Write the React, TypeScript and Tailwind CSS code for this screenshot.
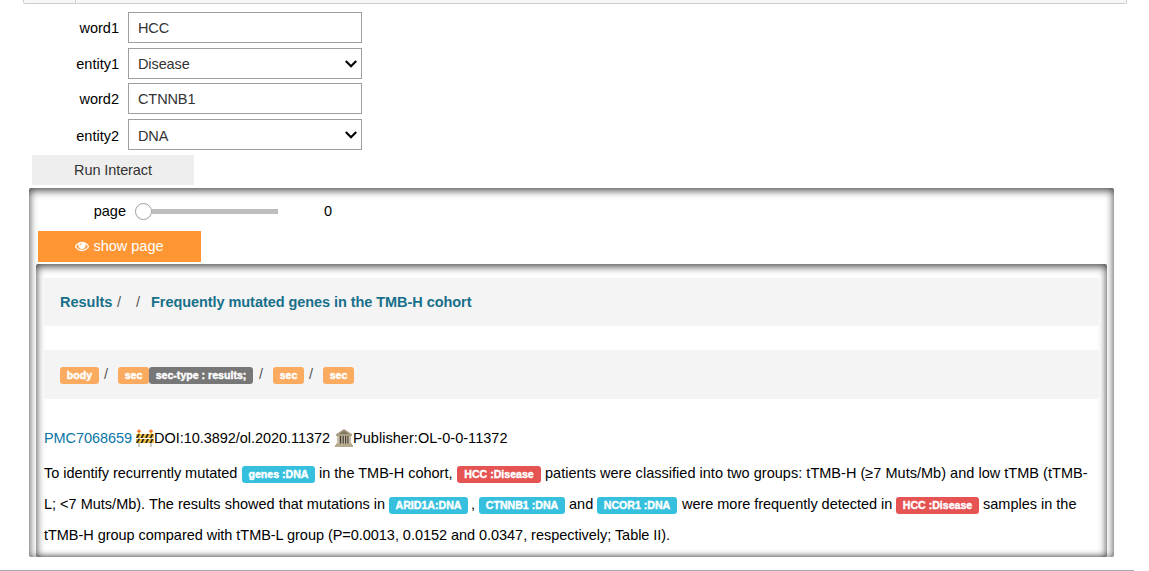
import type { ReactNode } from 'react';

function Eye() {
  return (
    <svg className="mr-[4px] h-[14px] w-[14px] shrink-0" viewBox="0 0 1792 1792" fill="currentColor" stroke="currentColor" strokeWidth="40">
      <path d="M1664 960q-152-236-381-353 61 104 61 225 0 185-131.500 316.500t-316.500 131.500-316.500-131.500-131.500-316.500q0-121 61-225-229 117-381 353 133 205 333.500 326.500t434.500 121.500 434.500-121.500 333.500-326.500zm-720-384q0-20-14-34t-34-14q-125 0-214.500 89.500t-89.500 214.500q0 20 14 34t34 14 34-14 14-34q0-86 61-147t147-61q20 0 34-14t14-34zm848 384q0 34-20 69-140 230-376.500 368.500t-499.500 138.500-499.500-139-376.500-368q-20-35-20-69t20-69q140-229 376.500-368t499.500-139 499.500 139 376.500 368q20 35 20 69z" />
    </svg>
  );
}

function Chevron() {
  return (
    <svg className="mr-[4px] h-[9px] w-[12px] shrink-0" viewBox="0 0 12 9" fill="none" stroke="#000" strokeWidth="2.1">
      <path d="M0.8 2.1 L6 7.2 L11.2 2.1" />
    </svg>
  );
}

function Field({ label, value, select = false, className = '', textClass = '' }: { label: string; value: string; select?: boolean; className?: string; textClass?: string }) {
  return (
    <div className={`flex h-[31px] items-center ${className}`}>
      <span className={`mr-[9px] w-[87px] text-right text-black ${textClass}`}>{label}</span>
      <div className="flex h-[31px] w-[234px] items-center justify-between border border-[#9e9e9e] bg-white pl-[9px] text-[#333]">
        <span className={`tracking-[-0.1px] ${textClass}`}>{value}</span>
        {select && <Chevron />}
      </div>
    </div>
  );
}

function Tag({ color, className = '', children }: { color: 'orange' | 'gray'; className?: string; children: ReactNode }) {
  const tone = color === 'orange' ? 'bg-[#fbab60]' : 'bg-[#777]';
  return (
    <span className={`flex h-[17px] shrink-0 items-center justify-center rounded-[3px] text-[10.6px] font-bold leading-[15px] text-white [-webkit-text-stroke:0.4px_white] ${tone} ${className}`}>
      {children}
    </span>
  );
}

function Entity({ color, className = '', children }: { color: 'blue' | 'red'; className?: string; children: ReactNode }) {
  const tone = color === 'blue' ? 'bg-[#36c0de]' : 'bg-[#e55353]';
  return (
    <span className={`mt-[3px] flex h-[17px] shrink-0 items-center justify-center rounded-[3px] text-[10.6px] font-bold text-white [-webkit-text-stroke:0.4px_white] ${tone} ${className}`}>
      {children}
    </span>
  );
}

function Barrier() {
  return (
    <svg className="h-[18px] w-[18px] shrink-0" viewBox="0 0 18 18">
      <path d="M2 4h2v14H2zM14 4h2v14h-2z" fill="#c9c9c5" />
      <path d="M0 5h18v4H0zM0 10h18v4H0z" fill="#f3c244" />
      <path d="M2 5h2L2 9H0zM6.500 5h2l-2 4h-2zM11 5h2l-2 4H9zM15.500 5h2l-2 4h-2zM2 10h2l-2 4H0zM6.500 10h2l-2 4h-2zM11 10h2l-2 4H9zM15.500 10h2l-2 4h-2z" fill="#2c2820" />
      <circle cx="3" cy="2.200" r="1.800" fill="#f47b35" />
      <circle cx="15" cy="2.200" r="1.800" fill="#f47b35" />
      <path d="M2 3.500h2V5H2zM14 3.500h2V5h-2z" fill="#ffd64a" />
    </svg>
  );
}

function Building() {
  return (
    <svg className="h-[18px] w-[18px] shrink-0" viewBox="0 0 18 18">
      <path d="M9 0L17 5.300V7H1V5.300z" fill="#a99d83" />
      <path d="M9 1.800L14 5H4z" fill="#82775f" />
      <path d="M2 7h14v8H2z" fill="#3e382f" />
      <path d="M2 7h2.800v8H2zM6.200 7h1.400v8H6.200zM8.800 7h1.200v8H8.800zM11.200 7h1.200v8h-1.200zM13.500 7H16v8h-2.500z" fill="#c9bea4" />
      <path d="M1 14.500h16v1.500H1zM0 16h18v2H0z" fill="#b5a98e" />
    </svg>
  );
}

export default function App() {
  return (
    <div className="h-[571px] w-[1149px] overflow-hidden bg-white font-['Liberation_Sans',Arial,sans-serif] text-[14.5px] leading-[20px] text-black">
      <div className="ml-[23px] flex h-[4px] w-[1104px] rounded-b-[2px] border border-t-0 border-[#cfcfcf] bg-[#f7f7f7]">
        <div className="w-[52px] border-r border-[#cfcfcf]" />
      </div>
      <div className="ml-[32px] pt-[8px]">
        <Field label="word1" value="HCC" />
        <Field label="entity1" value="Disease" select className="mt-[5px]" />
        <Field label="word2" value="CTNNB1" className="mt-[4px]" />
        <Field label="entity2" value="DNA" select className="mt-[5px]" textClass="pt-[2px]" />
        <button className="mt-[5px] flex h-[30px] w-[162px] items-center justify-center bg-[#eee] tracking-[-0.1px] text-[#333]">Run Interact</button>
      </div>

      <div className="ml-[29px] mt-[3px] h-[369px] w-[1085px] overflow-hidden rounded-[2px] shadow-[inset_0_2px_8px_rgba(0,0,0,0.8)]">
        <div className="flex h-[43px] items-center pt-[3px]">
          <span className="w-[97px] text-right">page</span>
          <span className="ml-[9px] h-[17px] w-[17px] rounded-full border border-[#9e9e9e] bg-white" />
          <span className="h-[5px] w-[126px] bg-[#bdbdbd]" />
          <span className="ml-[46px]">0</span>
        </div>
        <button className="ml-[9px] flex h-[31px] w-[163px] items-center justify-center bg-[#ff9633] pb-px text-white">
          <Eye />
          <span>show page</span>
        </button>

        <div className="ml-[7px] mt-[2px] h-[293px] w-[1071px] overflow-hidden rounded-[2px] px-[8px] pt-[14px] shadow-[inset_0_2px_8px_rgba(0,0,0,0.8)]">
          <div className="flex h-[48px] items-center rounded-[2px] bg-[#f4f4f4] pl-[16px] text-[#555]">
            <span className="w-[52px] font-bold text-[#17708a]">Results</span>
            <span className="ml-[5px] w-[19px]">/</span>
            <span className="w-[15px]">/</span>
            <span className="font-bold tracking-[-0.06px] text-[#17708a]">Frequently mutated genes in the TMB-H cohort</span>
          </div>

          <div className="mt-[24px] flex h-[49px] items-center rounded-[2px] bg-[#f4f4f4] pl-[16px] pt-[2px] text-[#555]">
            <Tag color="orange" className="w-[39px]">body</Tag>
            <span className="-mt-[3px] ml-[5px] w-[14px]">/</span>
            <Tag color="orange" className="w-[31px]">sec</Tag>
            <Tag color="gray" className="w-[104px]">sec-type : results;</Tag>
            <span className="-mt-[3px] ml-[6px] w-[14px]">/</span>
            <Tag color="orange" className="w-[31px]">sec</Tag>
            <span className="-mt-[3px] ml-[5px] w-[14px]">/</span>
            <Tag color="orange" className="w-[31px]">sec</Tag>
          </div>

          <div className="mt-[29px] flex h-[20px] items-center whitespace-pre">
            <a className="w-[92px] tracking-[-0.08px] text-[#0b75a8]">PMC7068659</a>
            <Barrier />
            <span className="w-[181px] tracking-[-0.04px]">DOI:10.3892/ol.2020.11372</span>
            <Building />
            <span className="tracking-[0.04px]">Publisher:OL-0-0-11372</span>
          </div>

          <div className="mt-[9px] whitespace-nowrap">
            <div className="flex h-[31px] items-center">
              <span className="w-[198px] shrink-0 tracking-[-0.03px]">To identify recurrently mutated</span>
              <Entity color="blue" className="w-[73px]">genes :DNA</Entity>
              <span className="ml-[4px] w-[138px] shrink-0">in the TMB-H cohort,</span>
              <Entity color="red" className="w-[84px]">HCC :Disease</Entity>
              <span className="ml-[4px] tracking-[0.024px]">patients were classified into two groups: tTMB-H (≥7 Muts/Mb) and low tTMB (tTMB-</span>
            </div>
            <div className="flex h-[31px] items-center">
              <span className="w-[345px] shrink-0">L; &lt;7 Muts/Mb). The results showed that mutations in</span>
              <Entity color="blue" className="w-[79px]">ARID1A:DNA</Entity>
              <span className="ml-[3px] w-[8px] shrink-0">,</span>
              <Entity color="blue" className="w-[86px]">CTNNB1 :DNA</Entity>
              <span className="ml-[4px] w-[28px] shrink-0">and</span>
              <Entity color="blue" className="w-[80px]">NCOR1 :DNA</Entity>
              <span className="ml-[5px] w-[214px] shrink-0 tracking-[-0.03px]">were more frequently detected in</span>
              <Entity color="red" className="w-[83px]">HCC :Disease</Entity>
              <span className="ml-[4px]">samples in the</span>
            </div>
            <div className="flex h-[31px] items-center tracking-[-0.04px]">tTMB-H group compared with tTMB-L group (P=0.0013, 0.0152 and 0.0347, respectively; Table II).</div>
          </div>
        </div>
      </div>
      <div className="mt-[13px] h-px w-[1134px] bg-[#ababab]" />
    </div>
  );
}
